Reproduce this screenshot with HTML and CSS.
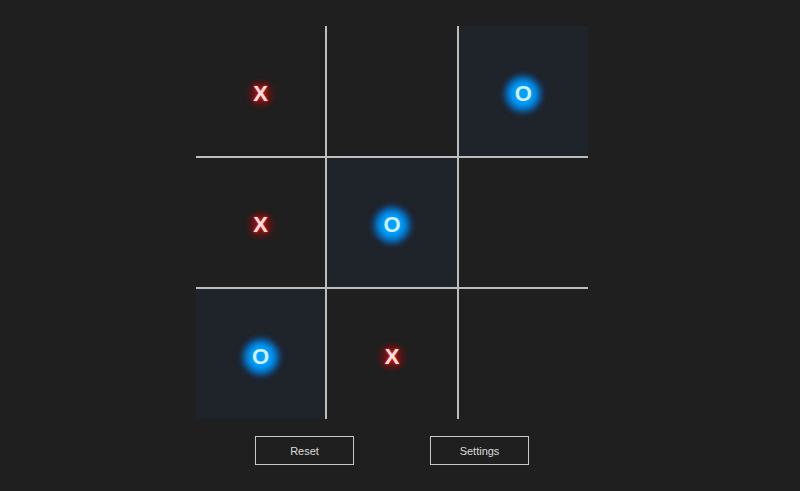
FILE: index.html
```html
<!DOCTYPE html>
<html>
<head>
<meta charset="utf-8">
<link rel="stylesheet" href="styles.css">
</head>
<body>
<main class="game">
  <div class="board">
    <div class="cell"><span class="mark x">X</span></div>
    <div class="cell"></div>
    <div class="cell win"><span class="mark o">O</span></div>
    <div class="cell"><span class="mark x">X</span></div>
    <div class="cell win"><span class="mark o">O</span></div>
    <div class="cell"></div>
    <div class="cell win"><span class="mark o">O</span></div>
    <div class="cell"><span class="mark x">X</span></div>
    <div class="cell"></div>
  </div>
  <div class="controls">
    <button class="btn">Reset</button>
    <button class="btn">Settings</button>
  </div>
</main>
</body>
</html>
```
FILE: styles.css
```css
html, body {
  margin: 0;
  padding: 0;
  background: #1f1f1f;
  height: 100%;
}
body {
  font-family: "Liberation Sans", Arial, sans-serif;
}
.game {
  width: 784px;
  display: flex;
  flex-direction: column;
  align-items: center;
  padding-top: 26px;
}
.board {
  width: 392px;
  height: 393px;
  display: grid;
  grid-template-columns: repeat(3, 1fr);
  grid-template-rows: repeat(3, 1fr);
  gap: 2px;
  background: #bdbdbd;
}
.cell {
  background: #1f1f1f;
  display: flex;
  align-items: center;
  justify-content: center;
  padding-top: 6px;
}
.cell.win {
  background: #1f232a;
}
.mark {
  position: relative;
  z-index: 0;
  font-size: 22px;
  font-weight: bold;
  line-height: 1;
}
.mark::before {
  content: "";
  position: absolute;
  left: 50%;
  top: 50%;
  border-radius: 50%;
  z-index: -1;
}
.mark.x {
  color: #fbe0e0;
  text-shadow: 0 0 2px #ff3030, 0 0 5px #d01818, 0 0 8px #a00c0c;
}
.mark.x::before {
  width: 34px;
  height: 34px;
  margin: -17px 0 0 -17px;
  background: radial-gradient(circle, rgba(150, 20, 20, 0.55) 0%, rgba(120, 15, 15, 0.35) 45%, rgba(90, 10, 10, 0) 70%);
}
.mark.o {
  color: #d4f0ff;
  text-shadow: 0 0 3px #00a6ff, 0 0 6px #00a0ff;
}
.mark.o::before {
  width: 44px;
  height: 44px;
  margin: -22px 0 0 -22px;
  filter: blur(2px);
  background: radial-gradient(circle, #0aa4ff 0%, #0098f5 35%, rgba(0, 130, 230, 0.75) 50%, rgba(0, 100, 200, 0.3) 62%, rgba(0, 80, 170, 0) 74%);
}
.controls {
  display: flex;
  gap: 76px;
  margin-top: 17px;
}
.btn {
  width: 99px;
  height: 29px;
  background: #1f1f1f;
  border: 1px solid #c8c8c8;
  color: #dcdcdc;
  font-family: "Liberation Sans", Arial, sans-serif;
  font-size: 11px;
  padding: 0;
  border-radius: 0;
}
```
